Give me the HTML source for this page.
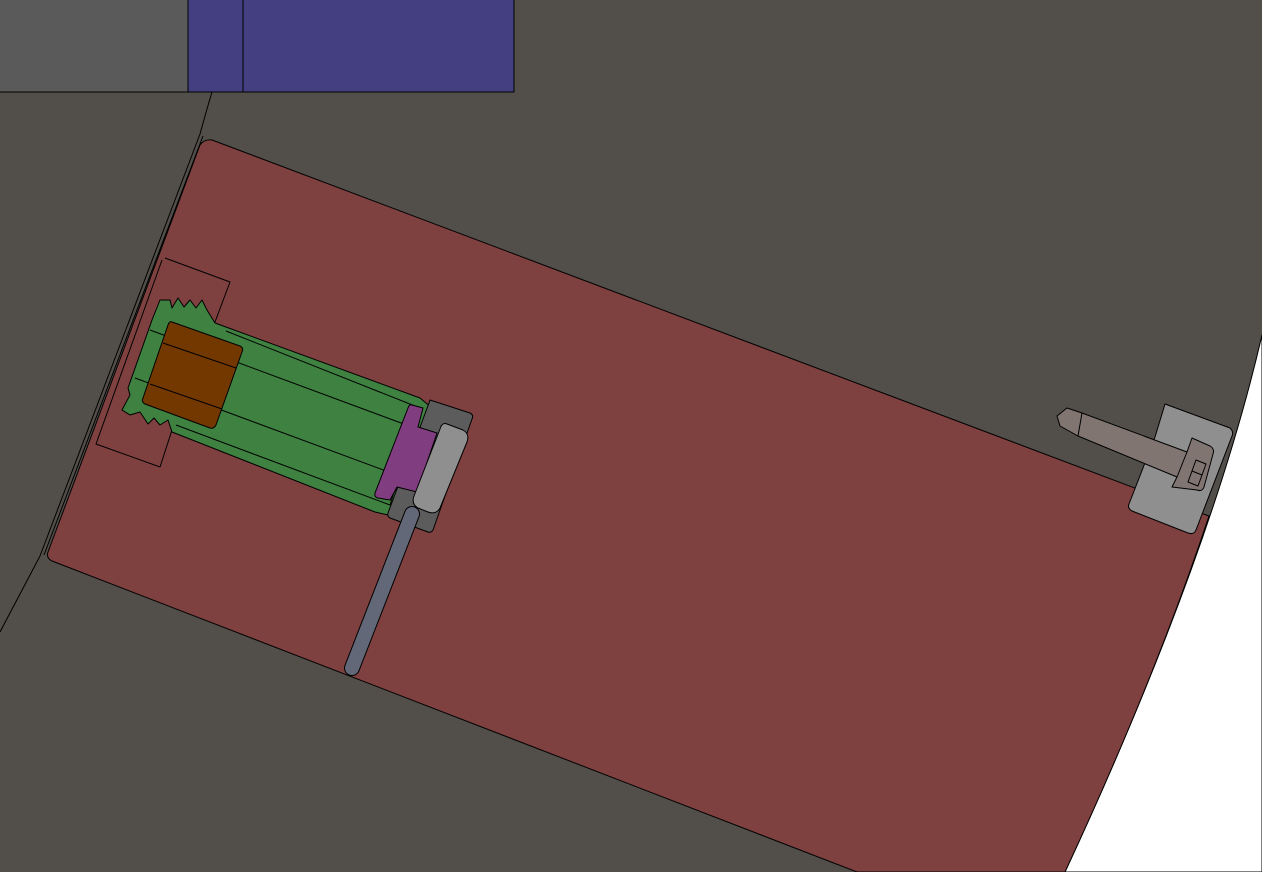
<!DOCTYPE html>
<html><head><style>html,body{margin:0;padding:0;background:#524f4a;}svg{display:block}</style></head>
<body>
<svg width="1262" height="872" viewBox="0 0 1262 872" xmlns="http://www.w3.org/2000/svg" stroke="#000" stroke-width="1" stroke-linejoin="round">
<rect x="0" y="0" width="1262" height="872" fill="#524f4a" stroke="none"/>
<path d="M1262 335 Q1210 560 1065 872 L1262 872 Z" fill="#fff" stroke="#000"/>
<rect x="-1" y="-1" width="189" height="93" fill="#5a5a5a"/>
<rect x="188" y="-1" width="326" height="93" fill="#433f80"/>
<line x1="243" y1="0" x2="243" y2="92"/>
<path d="M212 92 Q206 112 200 134 L40 556 Q18 598 0 632" fill="none"/>
<path d="M203 136 L44 555" fill="none"/>
<path d="M212 140 L1209 516 Q1155 679 1065 872 L857 872 L52 561 Q46 558 48 552 L200 145 Q204 139 212 140 Z" fill="#7f4040"/>
<path d="M165 258 L230 282 L215 322 M162 260 L96 444 L160 467 L172 430" fill="none"/>
<path d="M160 300 L170 300 L172 308 L178 298 L184 307 L190 300 L196 308 L202 300 L207 310 L215 323 L420 398 L432 408 L388 515 L375 512 L172 432 L168 420 L160 425 L154 418 L148 424 L140 412 L130 415 L122 410 L130 395 L128 388 L152 320 Z" fill="#3e8140"/>
<path d="M150 330 L420 430 M135 378 L405 478 M226 331 L420 408 L390 505 L176 425" fill="none"/>
<path d="M172 322 L240 346 Q244 348 242 352 L216 425 Q214 429 210 428 L145 404 Q141 402 143 398 L168 325 Q169 321 172 322 Z" fill="#733800"/>
<path d="M163 343 L236 368 M150 384 L222 409" fill="none"/>
<path d="M430 400 L470 413 Q474 415 472 419 L433 530 Q431 533 428 532 L390 518 Q387 516 388 513 L429 403 Z" fill="#5c5c5c"/>
<path d="M412 405 L423 408 L418 427 L437 433 L417 492 L397 487 L390 500 L378 498 Q374 497 375 493 L408 408 Q409 404 412 405 Z" fill="#803d80"/>
<path d="M447 424 L463 430 Q470 434 467 442 L440 508 Q436 515 428 512 L418 508 Q411 504 414 496 L440 429 Q442 422 447 424 Z" fill="#8f8f8f"/>
<line x1="412" y1="514" x2="352" y2="668" stroke="#000" stroke-width="16" stroke-linecap="round"/>
<line x1="412" y1="514" x2="352" y2="668" stroke="#636878" stroke-width="14" stroke-linecap="round"/>
<path d="M1165 404 L1230 428 Q1234 432 1232 436 L1196 530 Q1194 535 1188 533 L1132 511 Q1127 508 1129 504 L1155 437 Z" fill="#8f8f8f"/>
<path d="M1067 408 L1082 413 L1187 452 L1192 438 L1210 446 Q1215 449 1213 454 L1204 487 Q1202 492 1197 490 L1172 487 L1177 477 L1078 436 L1060 426 L1057 416 Z" fill="#807570"/>
<path d="M1082 413 L1078 436 M1187 452 L1177 477" fill="none"/>
<path d="M1196 460 L1206 464 L1198 486 L1188 482 Z M1192 471 L1202 475" fill="none"/>
</svg>
</body></html>
